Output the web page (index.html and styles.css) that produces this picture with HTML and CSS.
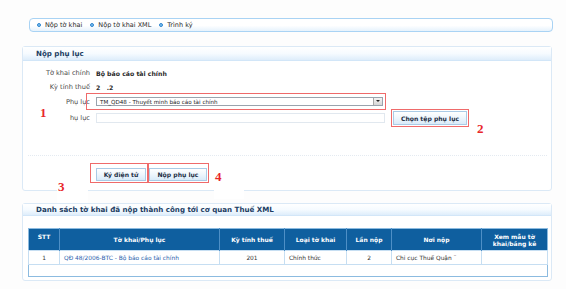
FILE: index.html
```html
<!DOCTYPE html>
<html lang="vi">
<head>
<meta charset="utf-8">
<title>Nộp phụ lục</title>
<link rel="stylesheet" href="styles.css">
</head>
<body>
<div class="page">
  <nav class="tabs">
    <span class="tab"><i class="dot"></i>Nộp tờ khai</span>
    <span class="tab"><i class="dot"></i>Nộp tờ khai XML</span>
    <span class="tab"><i class="dot"></i>Trình ký</span>
  </nav>

  <section class="panel panel-form">
    <div class="panel-head"><h2>Nộp phụ lục</h2></div>
    <div class="form">
      <div class="row r1"><span class="lbl">Tờ khai chính</span><span class="val">Bộ báo cáo tài chính</span></div>
      <div class="row r2"><span class="lbl">Kỳ tính thuế</span><span class="val">2&nbsp;&nbsp;&nbsp;.2</span></div>
      <div class="row r3"><span class="lbl">Phụ lục</span>
        <span class="mark mark-select"><span class="select"><span class="select-text">TM_QD48 - Thuyết minh báo cáo tài chính</span><span class="arrow"></span></span></span>
      </div>
      <div class="row r4"><span class="lbl">hụ lục</span>
        <span class="input"></span>
        <span class="mark mark-file"><button class="btn btn-file">Chọn tệp phụ lục</button></span>
      </div>
    </div>
    <div class="actions">
      <span class="mark mark-sign"><button class="btn btn-sign">Ký điện tử</button></span><span class="mark mark-submit"><button class="btn btn-submit">Nộp phụ lục</button></span>
    </div>
    <span class="note n1">1</span>
    <span class="note n2">2</span>
    <span class="note n3">3</span>
    <span class="note n4">4</span>
  </section>

  <section class="panel panel-list">
    <div class="panel-head"><h2>Danh sách tờ khai đã nộp thành công tới cơ quan Thuế XML</h2></div>
    <div class="table-wrap">
      <table class="grid">
        <colgroup>
          <col class="c1"><col class="c2"><col class="c3"><col class="c4"><col class="c5"><col class="c6"><col class="c7">
        </colgroup>
        <thead>
          <tr>
            <th class="top">STT</th>
            <th>Tờ khai/Phụ lục</th>
            <th>Kỳ tính thuế</th>
            <th>Loại tờ khai</th>
            <th>Lần nộp</th>
            <th>Nơi nộp</th>
            <th>Xem mẫu tờ<br>khai/bảng kê</th>
          </tr>
        </thead>
        <tbody>
          <tr>
            <td class="ctr">1</td>
            <td class="link">QĐ 48/2006-BTC - Bộ báo cáo tài chính</td>
            <td class="ctr">201</td>
            <td>Chính thức</td>
            <td class="ctr">2</td>
            <td>Chi cục Thuế Quận ¨</td>
            <td></td>
          </tr>
          <tr class="empty"><td colspan="7"></td></tr>
        </tbody>
      </table>
    </div>
  </section>
</div>
</body>
</html>
```

FILE: styles.css
```css
* { box-sizing: border-box; }

html, body {
  margin: 0;
  padding: 0;
  background: #fdfdfd;
}

body {
  font-family: "DejaVu Sans", Verdana, sans-serif;
  font-size: 6px;
  color: #333;
  width: 566px;
  height: 289px;
  overflow: hidden;
}

.page {
  padding: 18px 0 0 22px;
  width: 552px;
}

/* top tabs */
.tabs {
  margin-left: 7px;
  width: 524px;
  height: 14px;
  border: 1px solid #a9d3f4;
  border-radius: 4px;
  background: linear-gradient(#ffffff, #ffffff 55%, #e6f2fc);
  display: flex;
  align-items: center;
  padding-left: 7px;
  gap: 8px;
  font-size: 6.5px;
  color: #2a2a2a;
}

.tab {
  display: flex;
  align-items: center;
  gap: 4px;
}

.dot {
  width: 4px;
  height: 4px;
  border-radius: 50%;
  background: #7fc0f0;
  border: 1px solid #2f86cf;
  display: block;
}

/* panels */
.panel {
  position: relative;
  background: #fff;
  border: 1px solid #dbe9f6;
  border-radius: 3px;
}

.panel-form {
  margin-top: 14px;
}

.panel-head {
  height: 14px;
  background: linear-gradient(#ffffff, #f6fbff 50%, #deedfb);
  border-bottom: 1px solid #d2e6f8;
  display: flex;
  align-items: center;
  padding-left: 13px;
}

.panel-head h2 {
  margin: 0;
  font-size: 7.1px;
  font-weight: bold;
  color: #1c3d63;
}

.form {
  padding-top: 6px;
}

.row {
  display: flex;
  align-items: center;
}

.r1 { height: 12px; margin-bottom: 2px; }
.r2 { height: 12px; }
.r4 { margin-top: -1px; }

.lbl {
  width: 67px;
  text-align: right;
  color: #4a4a4a;
  flex: none;
  margin-right: 6px;
  font-size: 6.6px;
}

.val {
  font-weight: bold;
  color: #2a2a2a;
  font-size: 6.2px;
}

.mark {
  display: inline-flex;
  border: 1px solid #ef6a6a;
  flex: none;
}

.mark-select {
  margin-left: -10px;
  padding: 3px 2px 3px 9px;
  position: relative;
  z-index: 1;
}

.select {
  width: 287px;
  height: 9px;
  border: 1px solid #9aa3ad;
  background: #fff;
  display: flex;
  align-items: center;
  justify-content: space-between;
  padding-left: 3px;
  font-size: 5.6px;
  color: #1a1a1a;
}

.arrow {
  width: 9px;
  height: 7px;
  background: linear-gradient(#f4f4f4, #d6d6d6);
  border-left: 1px solid #a8a8a8;
  position: relative;
}

.arrow::after {
  content: "";
  position: absolute;
  left: 2px;
  top: 2px;
  border-left: 2px solid transparent;
  border-right: 2px solid transparent;
  border-top: 2px solid #222;
}

.input {
  width: 289px;
  height: 10px;
  border: 1px solid #e1e8ef;
  background: #fff;
  margin-right: 6px;
  flex: none;
}

.mark-file {
  padding: 1px;
}

.btn {
  font-family: inherit;
  font-size: 6.1px;
  font-weight: bold;
  color: #1d2f45;
  border: 1px solid #aacbe6;
  background: linear-gradient(#ffffff, #eef6fd 50%, #d9ebf9);
  padding: 0;
  margin: 0;
  display: flex;
  align-items: center;
  justify-content: center;
}

.btn-file {
  width: 74px;
  height: 14px;
}

.actions {
  margin: 28px 4px 0 5px;
  border-top: 1px dotted #e4eaf1;
  padding: 7px 0 7px 62px;
  display: flex;
}

.mark-sign {
  padding: 4px 1px 1px 5px;
}

.mark-submit {
  padding: 4px 1px 1px 0;
}

.btn-sign {
  width: 50px;
  height: 13px;
}

.btn-submit {
  width: 58px;
  height: 13px;
}

/* red annotation numbers */
.note {
  position: absolute;
  font-family: "Liberation Serif", "DejaVu Serif", serif;
  font-weight: bold;
  font-size: 13px;
  line-height: 13px;
  color: #e8262a;
  background: #fff;
}

.n1 { left: 17px; top: 59px; background: transparent; }
.n2 { left: 454px; top: 75px; background: transparent; }
.n3 { left: 34px; top: 132px; width: 31px; height: 27px; padding: 1px 0 0 1px; }
.n4 { left: 191px; top: 122px; width: 30px; height: 30px; padding: 1px 0 0 1px; }

/* list panel */
.panel-list {
  margin-top: 12px;
  height: 78px;
}

.panel-list .panel-head {
  height: 12px;
}

.table-wrap {
  padding: 12px 4px 0 5px;
}

.grid {
  width: 519px;
  border-collapse: collapse;
  table-layout: fixed;
  border: 1px solid #8cbbe0;
}

.c1 { width: 31px; }
.c2 { width: 160px; }
.c3 { width: 65px; }
.c4 { width: 62px; }
.c5 { width: 45px; }
.c6 { width: 90px; }
.c7 { width: 66px; }

.grid th {
  background: #0f5f9f;
  color: #fff;
  font-weight: bold;
  font-size: 6px;
  height: 22px;
  border-left: 1px solid #4e8fc6;
  padding: 0 2px;
  text-align: center;
  vertical-align: middle;
  line-height: 7px;
}

.grid th.top {
  vertical-align: top;
  padding-top: 4px;
  border-left: none;
}

.grid td {
  height: 14px;
  border: 1px solid #c6def2;
  padding: 0 4px;
  font-size: 5.9px;
  color: #333;
  white-space: nowrap;
  overflow: hidden;
}

.grid td.ctr { text-align: center; }
.grid td.link { color: #2b5fae; }

.grid tr.empty td {
  height: 12px;
  border: none;
}
```
